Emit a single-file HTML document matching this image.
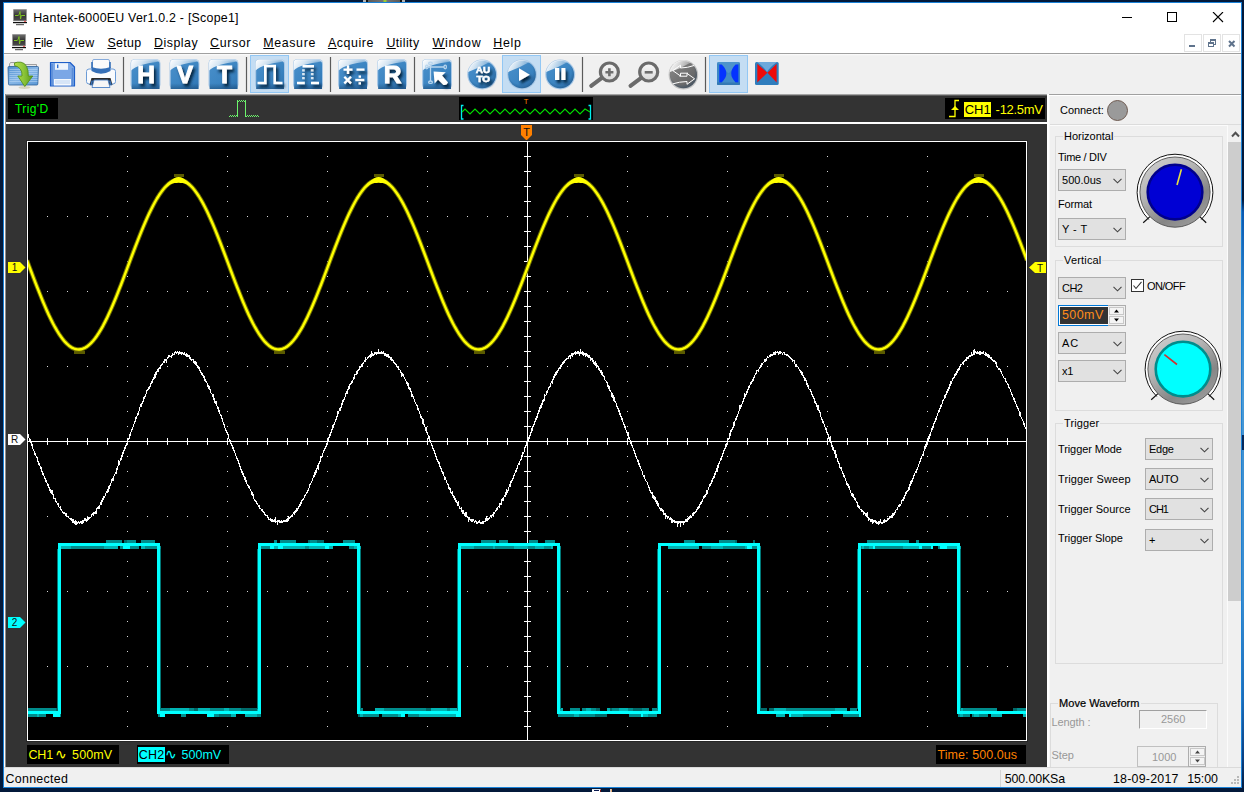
<!DOCTYPE html>
<html><head><meta charset="utf-8"><title>Hantek-6000EU Ver1.0.2 - [Scope1]</title>
<style>

*{box-sizing:border-box;margin:0;padding:0}
html,body{width:1244px;height:792px;overflow:hidden;background:#03193a}
body{font-family:"Liberation Sans",sans-serif;font-size:12px;color:#000;position:relative}
#desk{position:absolute;left:1242px;top:0;width:2px;height:792px;background:linear-gradient(#03193a 0,#03193a 200px,#0a58b0 212px,#2f86cc 300px,#4a9ad6 400px,#4494d2 435px,#06285a 435px,#06285a 450px,#4090d0 450px,#3a8ccf 600px,#1c6cb8 700px,#0a3e80 760px,#03193a 790px)}
#art1{position:absolute;left:592px;top:789px;width:9px;height:3px;background:#fff;border-top:1px solid #dfe8f0;border-right:1px solid #7a1a1a}
#art1 i{position:absolute;left:2px;top:0;width:5px;height:1px;background:#0a1a50}
#art2{position:absolute;left:610px;top:789px;width:2px;height:3px;background:linear-gradient(90deg,#cfd8e8,#f0a050)}
#art3{position:absolute;left:363px;top:0;width:42px;height:2px;background:linear-gradient(90deg,#b4b4b4 0,#b4b4b4 3px,#111 3px,#111 4.500px,#5a5a5a 5px,#747474 20px,#9acd32 21px,#9acd32 23px,#747474 24px,#5a5a5a 36.500px,#111 37px,#111 39px,#b4b4b4 39px)}
#win{position:absolute;left:3px;top:2px;width:1239px;height:786px;background:#1a82d8}
#win>div{position:absolute}
#title{left:1px;top:1px;width:1237px;height:28px;background:#fff}
.tt{position:absolute;top:7px;font-size:12.4px;line-height:16px;white-space:nowrap}
.mon{position:absolute}
#wctl{position:absolute;left:1118px;top:9px}
#menu{left:1px;top:29px;width:1237px;height:23px;background:#fff;border-bottom:1px solid #a0a0a0}
.mi{position:absolute;top:4px;font-size:12.4px;line-height:16px;white-space:nowrap}
.mi u{text-decoration:underline;text-underline-offset:1px}
.mdi{position:absolute;top:3px;width:18px;height:18px;border:1px solid #e3e3e3;background:#fff}
.mdi i{position:absolute;display:block}
#tbar{left:1px;top:52px;width:1237px;height:40px;background:linear-gradient(#fdfdfd 0,#f0f0f0 2px)}
#sstrip{left:1px;top:92px;width:1043px;height:2px;background:linear-gradient(#a4a4a4 0,#a4a4a4 1px,#5c5c5c 1px)}
#pstrip{left:1044px;top:92px;width:194px;height:2px;background:linear-gradient(#a0a0a0 0,#a0a0a0 1px,#fff 1px);border-left:2px solid #fff}
#scope{left:3px;top:94px;width:1041px;height:671px;background:#333}
#lbord{left:1px;top:92px;width:2px;height:673px;background:linear-gradient(90deg,#fff 0,#fff 50%,#8c8c8c 50%)}
.bk{position:absolute;display:block;background:#000}
.t{position:absolute;white-space:nowrap;line-height:15px}
.tl{font-family:"DejaVu Sans",sans-serif;font-weight:200;font-size:13.5px;line-height:15px}
#wl{position:absolute;left:0;top:26px;width:1041px;height:2px;background:#fff}
#panel{left:1044px;top:94px;width:194px;height:671px;background:#f0f0f0;font-size:11px}
#status{left:1px;top:765px;width:1237px;height:20px;background:#f0f0f0;font-size:12.400px;border-top:1px solid #dadada}
#status span{position:absolute;white-space:nowrap}
.sd{position:absolute;top:2px;width:1px;height:17px;background:#d4d4d4}

#panel{overflow:hidden}
#panel>*{position:absolute}
.pl{left:0;top:0;width:3px;height:671px;background:linear-gradient(90deg,#fff 0,#fff 2px,#f7f7f7 2px)}
.lb,.gl{white-space:nowrap;line-height:14px;font-size:11px}
.gl{background:#f0f0f0;padding:0 1px 0 1px;margin-left:-1px}
.dis{color:#989898}
.gb{border:1px solid #dcdcdc}
.hl{height:1px;background:#dcdcdc}
.led{display:block;width:21px;height:21px;border-radius:50%;background:#9a9a9a;border:1px solid #6e5a50}
.cb{background:#e1e1e1;border:1px solid #adadad}
.cb span{position:absolute;left:3px;top:4px;line-height:13px;font-size:11px;white-space:nowrap}
.cb svg{position:absolute;right:3.5px;top:8px}
.ck{width:13px;height:13px;border:1px solid #333;background:#fff}
.ck svg{position:absolute;left:-1px;top:-1px}
.sb{background:#f0f0f0;border-left:1px solid #fbfbfb}
.th{position:absolute;left:0;width:13px;background:#cdcdcd}
.sp{background:#fff;border:1px solid #0078d7}
.sp .sel{position:absolute;left:1px;top:1px;width:48px;height:17px;background:#333;color:#ff8c1a;font-size:12.500px;line-height:17px;padding-left:2px}
.ud{position:absolute;right:-1px;top:-1px;width:18px;height:21px;background:#f0f0f0;border:1px solid #adadad;border-left:0}
.ud b,.ud2 b{display:block;position:absolute;left:1px;width:15px;height:8px;border:1px solid #c8c8c8;background:#f4f4f4}
.ud b:first-child,.ud2 b:first-child{top:1px}
.ud b:last-child,.ud2 b:last-child{top:10px}
.ud svg,.ud2 svg{position:absolute;left:3px;top:1px}
.ed{border:1px solid #a0a0a0;border-right-color:#fff;border-bottom-color:#fff;background:#f0f0f0}
.ed span,.sp2 span{position:absolute;color:#989898;font-size:11px;line-height:13px;top:2px}
.ed span{left:21px}
.sp2{border:1px solid #c0c0c0;background:#f0f0f0}
.sp2 span{left:14px;top:4px}
.ud2{position:absolute;right:-1px;top:-1px;width:18px;height:21px;background:#f0f0f0;border:1px solid #adadad}

</style></head>
<body>
<div id="desk"></div><div id="art1"><i></i></div><div id="art2"></div><div id="art3"></div>
<div id="win">
<div id="title"><svg class="mon" style="left:8px;top:6px" width="16" height="17" viewBox="0 0 16 17">
<defs><linearGradient id="mg1" x1="0" y1="0" x2="0" y2="1"><stop offset="0" stop-color="#6a6a6a"/><stop offset=".5" stop-color="#333"/><stop offset="1" stop-color="#4c4c4c"/></linearGradient></defs>
<rect x="1" y="0" width="14" height="13.500" rx="1" fill="#9a9a9a"/>
<rect x="2" y="1" width="12" height="10.500" fill="url(#mg1)"/>
<path d="M3 6.500H6L7.200 5.500L8 2.500L8.500 10L9.300 6.500H13" stroke="#7ec225" stroke-width="1" fill="none"/>
<rect x="1" y="12" width="14" height="1" fill="#e8e8e8"/>
<rect x="12.300" y="11.800" width="1.400" height="1.200" fill="#e33"/>
<rect x="1" y="13" width="14" height="1.200" fill="#111"/>
<rect x="6" y="14.200" width="4" height="1" fill="#c8c8c8"/>
<rect x="4" y="15.200" width="8" height="1" fill="#444"/>
</svg><span class="tt" style="left:29.2px;letter-spacing:0.238px;">Hantek-6000EU Ver1.0.2 - [Scope1]</span>
<svg id="wctl" width="110" height="12" viewBox="0 0 110 12"><g stroke="#000" stroke-width="1" fill="none" shape-rendering="crispEdges"><path d="M0 5.5H10"/><rect x="45.5" y="0.5" width="9" height="9"/></g><path d="M91 0L101 10M101 0L91 10" stroke="#000" stroke-width="1.1" fill="none"/></svg>
</div>
<div id="menu"><svg class="mon" style="left:7px;top:3px" width="16" height="17" viewBox="0 0 16 17">
<defs><linearGradient id="mg2" x1="0" y1="0" x2="0" y2="1"><stop offset="0" stop-color="#6a6a6a"/><stop offset=".5" stop-color="#333"/><stop offset="1" stop-color="#4c4c4c"/></linearGradient></defs>
<rect x="1" y="0" width="14" height="13.500" rx="1" fill="#9a9a9a"/>
<rect x="2" y="1" width="12" height="10.500" fill="url(#mg2)"/>
<path d="M3 6.500H6L7.200 5.500L8 2.500L8.500 10L9.300 6.500H13" stroke="#7ec225" stroke-width="1" fill="none"/>
<rect x="1" y="12" width="14" height="1" fill="#e8e8e8"/>
<rect x="12.300" y="11.800" width="1.400" height="1.200" fill="#e33"/>
<rect x="1" y="13" width="14" height="1.200" fill="#111"/>
<rect x="6" y="14.200" width="4" height="1" fill="#c8c8c8"/>
<rect x="4" y="15.200" width="8" height="1" fill="#444"/>
</svg><span class="mi" style="left:29.6px;letter-spacing:-0.223px;"><u>F</u>ile</span><span class="mi" style="left:62.4px;letter-spacing:0.42px;"><u>V</u>iew</span><span class="mi" style="left:103.4px;letter-spacing:0.327px;"><u>S</u>etup</span><span class="mi" style="left:150.1px;letter-spacing:0.477px;"><u>D</u>isplay</span><span class="mi" style="left:206.1px;letter-spacing:0.622px;"><u>C</u>ursor</span><span class="mi" style="left:259.3px;letter-spacing:0.63px;"><u>M</u>easure</span><span class="mi" style="left:323.9px;letter-spacing:0.581px;"><u>A</u>cquire</span><span class="mi" style="left:382.4px;letter-spacing:0.401px;"><u>U</u>tility</span><span class="mi" style="left:428.5px;letter-spacing:0.824px;"><u>W</u>indow</span><span class="mi" style="left:489.3px;letter-spacing:0.672px;"><u>H</u>elp</span>
<div class="mdi" style="left:1180px"><i style="left:4px;top:10px;width:6px;height:2px;background:#5f738c"></i></div>
<div class="mdi" style="left:1199px"><svg width="17" height="17" viewBox="0 0 17 17" style="position:absolute;left:-1px;top:0px"><g fill="none" stroke="#5f738c" stroke-width="1" shape-rendering="crispEdges"><path d="M7.5 6.5V4.5H12.5V9.5H10.5"/><path d="M7.5 5.5H12.5" /><rect x="5.5" y="7.5" width="5" height="4"/><path d="M5.5 8.5H10.5"/></g></svg></div>
<div class="mdi" style="left:1218px"><svg width="17" height="17" viewBox="0 0 17 17" style="position:absolute;left:0px;top:-0.500px"><path d="M6 6L11.5 11.5M11.5 6L6 11.5" stroke="#5f738c" stroke-width="2" fill="none"/></svg></div>
</div>
<div id="tbar"><svg id="tbs" width="1237" height="40" viewBox="4 54 1237 40" style="position:absolute;left:0;top:0">
<defs>
<linearGradient id="bsq" x1="0" y1="0" x2="1" y2="1"><stop offset="0" stop-color="#4a90cb"/><stop offset=".6" stop-color="#3b84c1"/><stop offset="1" stop-color="#2f74b2"/></linearGradient>
<linearGradient id="gsq" x1="0" y1="0" x2="1" y2="1"><stop offset="0" stop-color="#8a8a8a"/><stop offset=".6" stop-color="#6e6e6e"/><stop offset="1" stop-color="#5c5c5c"/></linearGradient>
<linearGradient id="bsh" x1="0" y1="0" x2="0" y2="1"><stop offset="0.800" stop-color="#123b63" stop-opacity="0"/><stop offset="1" stop-color="#123b63" stop-opacity=".45"/></linearGradient>
<radialGradient id="csh" cx=".45" cy=".4" r=".6"><stop offset="0.750" stop-color="#123b63" stop-opacity="0"/><stop offset="1" stop-color="#123b63" stop-opacity=".35"/></radialGradient>
<linearGradient id="gls" x1="0" y1="0" x2="1" y2="0.300"><stop offset="0" stop-color="#fff" stop-opacity="1"/><stop offset=".4" stop-color="#fff" stop-opacity=".78"/><stop offset="1" stop-color="#fff" stop-opacity=".28"/></linearGradient>
<filter id="ds" x="-30%" y="-30%" width="170%" height="170%"><feGaussianBlur in="SourceAlpha" stdDeviation="1.600"/><feOffset dx="2.400" dy="2.600" result="b"/><feFlood flood-color="#06203a" flood-opacity="1"/><feComposite in2="b" operator="in"/><feMerge><feMergeNode/><feMergeNode in="SourceGraphic"/></feMerge></filter>
<linearGradient id="fold" x1="0" y1="0" x2="1" y2="1"><stop offset="0" stop-color="#4f8fd0"/><stop offset=".5" stop-color="#86b6e6"/><stop offset="1" stop-color="#5b98d6"/></linearGradient>
<linearGradient id="grn" x1="0" y1="0" x2="1" y2="0"><stop offset="0" stop-color="#b5e04a"/><stop offset=".5" stop-color="#8cc63a"/><stop offset="1" stop-color="#5c9a1c"/></linearGradient>
<linearGradient id="lens" x1="0" y1="0" x2="0" y2="1"><stop offset="0" stop-color="#fafafa"/><stop offset="1" stop-color="#d9d9d9"/></linearGradient>
</defs>
<g><path d="M10.500 62.500H19.500L21 64.500H36.500V70H9.500V64Z" fill="#e8e8e8" stroke="#8c8c8c" stroke-width="0.800"/><path d="M8 67.500Q8 66.500 9 66.500H37.500Q38.500 66.500 38.500 67.500L37.800 84Q37.800 85 36.800 85H9.500Q8.500 85 8.500 84Z" fill="url(#fold)" stroke="#2c5f98" stroke-width="0.800"/><path d="M9.500 69.500H37.500M9.500 71.500H37.500M9.500 73.500H37.500M9.500 75.500H37.500M9.500 77.500H37.500M9.500 79.500H37.500M9.500 81.500H37.500" stroke="#c4def6" stroke-width="0.700" opacity=".7"/><ellipse cx="24.500" cy="87.500" rx="6" ry="1.500" fill="#c9c7a8" opacity=".7"/><path d="M14.500 63Q17 61.800 21 62.200Q28.500 63.500 28.300 76H32.800L24.800 86.500L17.800 76H22Q22.500 67.500 14.500 65.500Z" fill="url(#grn)" stroke="#4e8a14" stroke-width="0.800" stroke-linejoin="round"/></g>
<g><path d="M50.500 62.500H70L74.500 67V86H50.500Z" fill="#7ba7e6" stroke="#1f5fc8" stroke-width="1.200" stroke-linejoin="round"/><path d="M52 64V85M72.500 68V85" stroke="#5a8cd8" stroke-width="1.500"/><rect x="55" y="63.200" width="13" height="6.600" fill="#eef4fc"/><rect x="57" y="64.500" width="1.400" height="3.600" fill="#2f6fd0"/><rect x="54" y="79" width="17" height="6.500" fill="#f4f8fd"/><path d="M55 81H70M55 83H70" stroke="#a9c6ee" stroke-width="0.800"/></g>
<g><rect x="86.500" y="69" width="29" height="15" rx="2.500" fill="#fafbfd" stroke="#6b9bd6" stroke-width="1"/><path d="M92.500 70V61Q92.500 59.500 94 59.500H108Q109.500 59.500 109.500 61V70Z" fill="#fbfbfb" stroke="#7aa3d8" stroke-width="0.900"/><path d="M91.500 67V71Q101 76.500 110.500 71V67Q101 70.500 91.500 67Z" fill="#3670b8"/><path d="M92 62V68M110 62V68" stroke="#3670b8" stroke-width="1.600"/><path d="M91.500 78H110.500L112.500 85H89.500Z" fill="#2b2b2b"/><path d="M94 80H108L110 87.500H92Z" fill="#f6f6f6" stroke="#4b80c4" stroke-width="0.900"/><path d="M92.300 80.500L90.800 85.500M109.700 80.500L111.200 85.500" stroke="#3670b8" stroke-width="1.500"/></g>
<path d="M123.500 57V92" stroke="#5a5a5a" stroke-width="1.200"/>
<g transform="translate(130.5 59)"><rect x="0" y="0" width="30" height="30" rx="4.500" fill="#a9c8e6"/><path d="M1.200 30V5Q1.200 1.200 5 1.200H25Q29 1.200 29 5V30Z" fill="url(#bsq)"/><path d="M1.200 30V5Q1.200 1.200 5 1.200H25Q29 1.200 29 5V30Z" fill="url(#bsh)"/><path d="M0.600 11.500Q7 5 29.4 2.500V4.500Q29.4 0.600 25.5 0.600H4.500Q0.600 0.600 0.600 4.500Z" fill="url(#gls)"/></g>
<text x="146" y="83" font-size="24.5" font-weight="bold" text-anchor="middle" fill="#fff" stroke="#fff" stroke-width="0.900" filter="url(#ds)" font-family="Liberation Sans, sans-serif">H</text>
<g transform="translate(169.5 59)"><rect x="0" y="0" width="30" height="30" rx="4.500" fill="#a9c8e6"/><path d="M1.200 30V5Q1.200 1.200 5 1.200H25Q29 1.200 29 5V30Z" fill="url(#bsq)"/><path d="M1.200 30V5Q1.200 1.200 5 1.200H25Q29 1.200 29 5V30Z" fill="url(#bsh)"/><path d="M0.600 11.500Q7 5 29.4 2.500V4.500Q29.4 0.600 25.5 0.600H4.500Q0.600 0.600 0.600 4.500Z" fill="url(#gls)"/></g>
<text x="185" y="83" font-size="24.5" font-weight="bold" text-anchor="middle" fill="#fff" stroke="#fff" stroke-width="0.900" filter="url(#ds)" font-family="Liberation Sans, sans-serif">V</text>
<g transform="translate(208.5 59)"><rect x="0" y="0" width="30" height="30" rx="4.500" fill="#a9c8e6"/><path d="M1.200 30V5Q1.200 1.200 5 1.200H25Q29 1.200 29 5V30Z" fill="url(#bsq)"/><path d="M1.200 30V5Q1.200 1.200 5 1.200H25Q29 1.200 29 5V30Z" fill="url(#bsh)"/><path d="M0.600 11.500Q7 5 29.4 2.500V4.500Q29.4 0.600 25.5 0.600H4.500Q0.600 0.600 0.600 4.500Z" fill="url(#gls)"/></g>
<text x="224.5" y="83" font-size="24.5" font-weight="bold" text-anchor="middle" fill="#fff" stroke="#fff" stroke-width="0.900" filter="url(#ds)" font-family="Liberation Sans, sans-serif">T</text>
<path d="M246.500 57V92" stroke="#5a5a5a" stroke-width="1.200"/>
<rect x="250.500" y="55.500" width="38" height="37" fill="#c4ddf3" stroke="#92c7f4" stroke-width="1"/>
<g transform="translate(255 59)"><rect x="0" y="0" width="30" height="30" rx="4.500" fill="#a9c8e6"/><path d="M1.200 30V5Q1.200 1.200 5 1.200H25Q29 1.200 29 5V30Z" fill="url(#bsq)"/><path d="M1.200 30V5Q1.200 1.200 5 1.200H25Q29 1.200 29 5V30Z" fill="url(#bsh)"/><path d="M0.600 11.500Q7 5 29.4 2.500V4.500Q29.4 0.600 25.5 0.600H4.500Q0.600 0.600 0.600 4.500Z" fill="url(#gls)"/></g>
<path d="M257.500 83H265.300V66H274.700V83H282.500" fill="none" stroke="#fff" stroke-width="2.600" filter="url(#ds)"/>
<g transform="translate(293 59)"><rect x="0" y="0" width="30" height="30" rx="4.500" fill="#a9c8e6"/><path d="M1.200 30V5Q1.200 1.200 5 1.200H25Q29 1.200 29 5V30Z" fill="url(#bsq)"/><path d="M1.200 30V5Q1.200 1.200 5 1.200H25Q29 1.200 29 5V30Z" fill="url(#bsh)"/><path d="M0.600 11.500Q7 5 29.4 2.500V4.500Q29.4 0.600 25.5 0.600H4.500Q0.600 0.600 0.600 4.500Z" fill="url(#gls)"/></g>
<g filter="url(#ds)" stroke="#fff" fill="none"><path d="M302.500 66.300H314M297 83H304.800M311 83H319" stroke-width="2.400"/><path d="M303.400 69.200V80.500M312.200 69.200V80.500" stroke-width="2.600" stroke-dasharray="2.200 1.700" opacity=".8"/></g>
<path d="M330.500 57V92" stroke="#5a5a5a" stroke-width="1.200"/>
<g transform="translate(338 59)"><rect x="0" y="0" width="30" height="30" rx="4.500" fill="#a9c8e6"/><path d="M1.200 30V5Q1.200 1.200 5 1.200H25Q29 1.200 29 5V30Z" fill="url(#bsq)"/><path d="M1.200 30V5Q1.200 1.200 5 1.200H25Q29 1.200 29 5V30Z" fill="url(#bsh)"/><path d="M0.600 11.500Q7 5 29.4 2.500V4.500Q29.4 0.600 25.5 0.600H4.500Q0.600 0.600 0.600 4.500Z" fill="url(#gls)"/></g>
<g filter="url(#ds)" stroke="#fff" fill="none" stroke-width="2.300"><path d="M343.500 69.600H352.500M348 65.200V74"/><path d="M356.500 69.600H364.500"/><path d="M344.300 76.800L351 83.400M351 76.800L344.300 83.400"/><path d="M355.300 80H364.300"/><path d="M359.800 75.500V77.700M359.800 82.300V84.500" stroke-width="2.400"/></g>
<g transform="translate(377 59)"><rect x="0" y="0" width="30" height="30" rx="4.500" fill="#a9c8e6"/><path d="M1.200 30V5Q1.200 1.200 5 1.200H25Q29 1.200 29 5V30Z" fill="url(#bsq)"/><path d="M1.200 30V5Q1.200 1.200 5 1.200H25Q29 1.200 29 5V30Z" fill="url(#bsh)"/><path d="M0.600 11.500Q7 5 29.4 2.500V4.500Q29.4 0.600 25.5 0.600H4.500Q0.600 0.600 0.600 4.500Z" fill="url(#gls)"/></g>
<text x="392.5" y="83" font-size="24.5" font-weight="bold" text-anchor="middle" fill="#fff" stroke="#fff" stroke-width="0.900" filter="url(#ds)" font-family="Liberation Sans, sans-serif">R</text>
<path d="M414.500 57V92" stroke="#5a5a5a" stroke-width="1.200"/>
<g transform="translate(422 59)"><rect x="0" y="0" width="30" height="30" rx="4.500" fill="#a9c8e6"/><path d="M1.200 30V5Q1.200 1.200 5 1.200H25Q29 1.200 29 5V30Z" fill="url(#bsq)"/><path d="M1.200 30V5Q1.200 1.200 5 1.200H25Q29 1.200 29 5V30Z" fill="url(#bsh)"/><path d="M0.600 11.500Q7 5 29.4 2.500V4.500Q29.4 0.600 25.5 0.600H4.500Q0.600 0.600 0.600 4.500Z" fill="url(#gls)"/></g>
<g fill="none" stroke="#b9d6ee" stroke-width="1.300"><path d="M430.500 64.500V81M428 67H444"/><ellipse cx="430.500" cy="63.300" rx="1.900" ry="1.200"/><ellipse cx="430.500" cy="82.200" rx="1.900" ry="1.200"/><ellipse cx="426.800" cy="67" rx="1.200" ry="1.800"/><ellipse cx="445.200" cy="67" rx="1.200" ry="1.800"/></g>
<path d="M433.600 71.600L445.800 72.200L442 75.600L448 82.500Q446.500 85.500 443.500 85L438 79.600L434.600 83.500Z" fill="#fff" filter="url(#ds)"/>
<path d="M459.500 57V92" stroke="#5a5a5a" stroke-width="1.200"/>
<g transform="translate(482.2 74.5)"><circle r="15" fill="#a9c8e6"/><circle r="13.8" fill="url(#bsq)"/><circle r="13.8" fill="url(#csh)"/><path d="M-14.1 -2.400A14.2 14.2 0 0 1 7.5 -12.4Q-2.0 -6.8 -14.1 -2.400Z" fill="url(#gls)"/></g>
<g filter="url(#ds)" font-size="8.800" font-weight="bold" fill="#fff" stroke="#fff" stroke-width="0.500" font-family="Liberation Sans, sans-serif"><text x="475.800" y="72.500" textLength="14.300" lengthAdjust="spacingAndGlyphs">AU</text><text x="476.400" y="81.800" textLength="13.600" lengthAdjust="spacingAndGlyphs">TO</text></g>
<rect x="502.500" y="55.500" width="38" height="37" fill="#c4ddf3" stroke="#92c7f4" stroke-width="1"/>
<g transform="translate(522 74.5)"><circle r="15" fill="#a9c8e6"/><circle r="13.8" fill="url(#bsq)"/><circle r="13.8" fill="url(#csh)"/><path d="M-14.1 -2.400A14.2 14.2 0 0 1 7.5 -12.4Q-2.0 -6.8 -14.1 -2.400Z" fill="url(#gls)"/></g>
<path d="M519 68.300L529.800 74.700L519 81Z" fill="#fff" filter="url(#ds)"/>
<g transform="translate(560.2 74.5)"><circle r="15" fill="#a9c8e6"/><circle r="13.8" fill="url(#bsq)"/><circle r="13.8" fill="url(#csh)"/><path d="M-14.1 -2.400A14.2 14.2 0 0 1 7.5 -12.4Q-2.0 -6.8 -14.1 -2.400Z" fill="url(#gls)"/></g>
<path d="M555 68H559.200V80H555ZM561.400 68H565.400V80H561.400Z" fill="#fff" filter="url(#ds)"/>
<path d="M582.500 57V92" stroke="#5a5a5a" stroke-width="1.200"/>
<g stroke="#6b6b6b" fill="none" stroke-linecap="round"><path d="M601.9 77.8L591.1999999999999 85.8" stroke-width="4"/><circle cx="609.4" cy="72" r="9" stroke-width="3.200" fill="url(#lens)"/><path d="M605.4 72.300H613.4M609.4 68.300V76.300" stroke-width="2.600" stroke-linecap="butt" stroke="#6e6e6e"/></g>
<g stroke="#6b6b6b" fill="none" stroke-linecap="round"><path d="M641.2 77.8L630.5 85.8" stroke-width="4"/><circle cx="648.7" cy="72" r="9" stroke-width="3.200" fill="url(#lens)"/><path d="M644.7 72.300H652.7" stroke-width="2.600" stroke-linecap="butt" stroke="#6e6e6e"/></g>
<g transform="translate(683.4 74.7)"><circle r="14.8" fill="#c4c4c4"/><circle r="13.600000000000001" fill="url(#gsq)"/><circle r="13.600000000000001" fill="url(#csh)"/><path d="M-13.9 -2.400A14.0 14.0 0 0 1 7.4 -12.3Q-1.9 -6.7 -13.9 -2.400Z" fill="url(#gls)"/></g>
<g fill="none" stroke="#fff" stroke-width="1" stroke-linejoin="miter"><path d="M694 65.500Q688 67.800 680.500 68V65.200L672.800 70.600L680.500 76V73.200H688"/><path d="M673 83.800Q679 81.800 687 81.500V84.300L694.600 78.800L687 73.400V76.200H679.500"/></g>
<path d="M705.500 57V92" stroke="#5a5a5a" stroke-width="1.200"/>
<rect x="709.500" y="55.500" width="38" height="37" fill="#c4ddf3" stroke="#92c7f4" stroke-width="1"/>
<g><rect x="717" y="62" width="23" height="23" rx="1.500" fill="#3b87c4"/><path d="M717 62H740L728.500 73.500Z" fill="#5a9bd0" opacity=".6"/><path d="M717 85H740L728.500 73.500Z" fill="#4a8fc8" opacity=".5"/><path d="M719.300 64.600H721.700Q731 73.500 721.700 82.400H719.300Z" fill="#0433ff"/><path d="M738.400 64.600H735.600Q726.800 73.500 735.600 82.400H738.400Z" fill="#0433ff"/><path d="M717 82.500H740V85H717Z" fill="#2c6ea8" opacity=".6"/></g>
<g><rect x="755" y="62" width="23.700" height="23" rx="1.500" fill="#2f7dbd"/><path d="M757 62H777Q770 67 767 72Q764 67 757 62Z" fill="#7db4e2" opacity=".8"/><path d="M757.300 63.800Q763.500 69.500 767.400 72.800Q763.500 76.500 757.300 82.400Z" fill="#ee0a0a"/><path d="M776.600 63.800Q771 69.500 767.400 72.800Q771 76.500 776.600 82.400Z" fill="#ee0a0a"/></g>
</svg></div>
<div id="sstrip"></div><div id="pstrip"></div>
<div id="lbord"></div>
<div id="scope">
<i class="bk" style="left:2px;top:2px;width:50px;height:21px;background:#000"></i><span class="t" style="left:9.1px;top:6.5px;font-size:12px;line-height:12px;letter-spacing:0.383px;color:#00ff00;">Trig'D</span><svg style="position:absolute;left:214px;top:2px" width="45" height="22" viewBox="220 98 45 22"><g stroke="#6cf36c" stroke-width="1" fill="none" shape-rendering="crispEdges"><path d="M229 116.500H238M246 116.500H259M239 100.500H245" stroke-dasharray="1 1"/><path d="M230 115.500H237M247 115.500H258M238 101.500H246" stroke-dasharray="1 1"/><path d="M237.500 100V117M245.500 100V117"/></g></svg><i class="bk" style="left:453px;top:1px;width:134px;height:23px;background:#000"></i><span class="t" style="left:517.7px;top:2.2px;font-size:7.5px;line-height:7.5px;letter-spacing:0.506px;color:#ff8000;">T</span><svg style="position:absolute;left:453px;top:1px" width="134" height="23" viewBox="459 97 134 23"><path d="M463.500 105.500H461.500V119H463.500M588.500 105.500H590.500V119H588.500" stroke="#0ee" stroke-width="1.300" fill="none"/><path d="M462 112 L465.0 109 L470.0 114 L475.0 109 L480.0 114 L485.0 109 L490.0 114 L495.0 109 L500.0 114 L505.0 109 L510.0 114 L515.0 109 L520.0 114 L525.0 109 L530.0 114 L535.0 109 L540.0 114 L545.0 109 L550.0 114 L555.0 109 L560.0 114 L565.0 109 L570.0 114 L575.0 109 L580.0 114 L585.0 109 L590 112" fill="none" stroke="#0d0" stroke-width="1.100"/></svg><i class="bk" style="left:939px;top:2px;width:100px;height:21px;background:#000"></i><svg style="position:absolute;left:942px;top:3px" width="12" height="19" viewBox="948 99 12 19"><path d="M949 116.500H955V100.500H959" fill="none" stroke="#ff0" stroke-width="1.300"/><path d="M955 106L951 110H959Z" fill="#ff0"/></svg><i class="bk" style="left:958px;top:6px;width:27px;height:15px;background:#ffff00"></i><span class="t" style="left:958.7px;top:7.0px;font-size:13px;line-height:13px;letter-spacing:0.042px;color:#000;">CH1</span><span class="t" style="left:989.6px;top:7.0px;font-size:13px;line-height:13px;letter-spacing:-0.29px;color:#ffff00;">-12.5mV</span>
<div id="wl"></div>
<svg id="plot" style="position:absolute;left:0;top:28px" width="1041" height="621" viewBox="6 124 1041 621">
<path d="M521 125H532V135L526.500 140.500L521 135Z" fill="#ff8000"/>
<text x="526.500" y="135.500" font-size="11" text-anchor="middle" fill="#111" font-family="Liberation Sans, sans-serif">T</text>
<rect x="26" y="140" width="1002" height="602" fill="#262626"/>
<rect x="27.500" y="141.500" width="999" height="599" fill="#000" stroke="#fff" stroke-width="1" shape-rendering="crispEdges"/>
<g stroke="#d8d8d8" stroke-width="1" shape-rendering="crispEdges" fill="none"><path d="M47 216.5H1027" stroke-dasharray="1 19"/><path d="M47 291.5H1027" stroke-dasharray="1 19"/><path d="M47 366.5H1027" stroke-dasharray="1 19"/><path d="M47 516.5H1027" stroke-dasharray="1 19"/><path d="M47 591.5H1027" stroke-dasharray="1 19"/><path d="M47 666.5H1027" stroke-dasharray="1 19"/><path d="M127.5 156V740" stroke-dasharray="1 14"/><path d="M227.5 156V740" stroke-dasharray="1 14"/><path d="M327.5 156V740" stroke-dasharray="1 14"/><path d="M427.5 156V740" stroke-dasharray="1 14"/><path d="M627.5 156V740" stroke-dasharray="1 14"/><path d="M727.5 156V740" stroke-dasharray="1 14"/><path d="M827.5 156V740" stroke-dasharray="1 14"/><path d="M927.5 156V740" stroke-dasharray="1 14"/></g>
<g stroke="#fff" shape-rendering="crispEdges" fill="none"><path d="M28 441.500H1026M527.500 142V740" stroke-width="1"/><path d="M47 441.500H1026" stroke-width="7" stroke-dasharray="1 19"/><path d="M527.500 156V740" stroke-width="7" stroke-dasharray="1 14"/></g>
<clipPath id="pc"><rect x="28" y="142" width="998" height="598"/></clipPath>
<g clip-path="url(#pc)" fill="none">
<path d="M174 175.500H184M74 352.500H85M374 175.500H384M274 352.500H285M574 175.500H584M474 352.500H485M774 175.500H784M674 352.500H685M974 175.500H984M874 352.500H885" stroke="#5a5a00" stroke-width="3" shape-rendering="crispEdges"/>
<path d="M27 260.3L29 265.7L31 271.0L33 276.3L35 281.6L37 286.7L39 291.8L41 296.8L43 301.7L45 306.4L47 311.0L49 315.4L51 319.5L53 323.5L55 327.2L57 330.7L59 333.9L61 336.8L63 339.5L65 341.9L67 343.9L69 345.7L71 347.1L73 348.2L75 349.0L77 349.4L79 349.5L81 349.3L83 348.7L85 347.8L87 346.6L89 345.0L91 343.1L93 341.0L95 338.5L97 335.7L99 332.7L101 329.3L103 325.8L105 321.9L107 317.9L109 313.6L111 309.2L113 304.6L115 299.8L117 294.9L119 289.8L121 284.7L123 279.5L125 274.2L127 268.9L129 263.5L131 258.2L133 252.9L135 247.6L137 242.5L139 237.4L141 232.4L143 227.5L145 222.8L147 218.2L149 213.8L151 209.7L153 205.7L155 202.0L157 198.5L159 195.3L161 192.4L163 189.7L165 187.3L167 185.3L169 183.5L171 182.1L173 181.0L175 180.2L177 179.8L179 179.7L181 179.9L183 180.5L185 181.4L187 182.6L189 184.2L191 186.1L193 188.2L195 190.7L197 193.5L199 196.5L201 199.9L203 203.4L205 207.3L207 211.3L209 215.6L211 220.0L213 224.6L215 229.4L217 234.3L219 239.4L221 244.5L223 249.7L225 255.0L227 260.3L229 265.7L231 271.0L233 276.3L235 281.6L237 286.7L239 291.8L241 296.8L243 301.7L245 306.4L247 311.0L249 315.4L251 319.5L253 323.5L255 327.2L257 330.7L259 333.9L261 336.8L263 339.5L265 341.9L267 343.9L269 345.7L271 347.1L273 348.2L275 349.0L277 349.4L279 349.5L281 349.3L283 348.7L285 347.8L287 346.6L289 345.0L291 343.1L293 341.0L295 338.5L297 335.7L299 332.7L301 329.3L303 325.8L305 321.9L307 317.9L309 313.6L311 309.2L313 304.6L315 299.8L317 294.9L319 289.8L321 284.7L323 279.5L325 274.2L327 268.9L329 263.5L331 258.2L333 252.9L335 247.6L337 242.5L339 237.4L341 232.4L343 227.5L345 222.8L347 218.2L349 213.8L351 209.7L353 205.7L355 202.0L357 198.5L359 195.3L361 192.4L363 189.7L365 187.3L367 185.3L369 183.5L371 182.1L373 181.0L375 180.2L377 179.8L379 179.7L381 179.9L383 180.5L385 181.4L387 182.6L389 184.2L391 186.1L393 188.2L395 190.7L397 193.5L399 196.5L401 199.9L403 203.4L405 207.3L407 211.3L409 215.6L411 220.0L413 224.6L415 229.4L417 234.3L419 239.4L421 244.5L423 249.7L425 255.0L427 260.3L429 265.7L431 271.0L433 276.3L435 281.6L437 286.7L439 291.8L441 296.8L443 301.7L445 306.4L447 311.0L449 315.4L451 319.5L453 323.5L455 327.2L457 330.7L459 333.9L461 336.8L463 339.5L465 341.9L467 343.9L469 345.7L471 347.1L473 348.2L475 349.0L477 349.4L479 349.5L481 349.3L483 348.7L485 347.8L487 346.6L489 345.0L491 343.1L493 341.0L495 338.5L497 335.7L499 332.7L501 329.3L503 325.8L505 321.9L507 317.9L509 313.6L511 309.2L513 304.6L515 299.8L517 294.9L519 289.8L521 284.7L523 279.5L525 274.2L527 268.9L529 263.5L531 258.2L533 252.9L535 247.6L537 242.5L539 237.4L541 232.4L543 227.5L545 222.8L547 218.2L549 213.8L551 209.7L553 205.7L555 202.0L557 198.5L559 195.3L561 192.4L563 189.7L565 187.3L567 185.3L569 183.5L571 182.1L573 181.0L575 180.2L577 179.8L579 179.7L581 179.9L583 180.5L585 181.4L587 182.6L589 184.2L591 186.1L593 188.2L595 190.7L597 193.5L599 196.5L601 199.9L603 203.4L605 207.3L607 211.3L609 215.6L611 220.0L613 224.6L615 229.4L617 234.3L619 239.4L621 244.5L623 249.7L625 255.0L627 260.3L629 265.7L631 271.0L633 276.3L635 281.6L637 286.7L639 291.8L641 296.8L643 301.7L645 306.4L647 311.0L649 315.4L651 319.5L653 323.5L655 327.2L657 330.7L659 333.9L661 336.8L663 339.5L665 341.9L667 343.9L669 345.7L671 347.1L673 348.2L675 349.0L677 349.4L679 349.5L681 349.3L683 348.7L685 347.8L687 346.6L689 345.0L691 343.1L693 341.0L695 338.5L697 335.7L699 332.7L701 329.3L703 325.8L705 321.9L707 317.9L709 313.6L711 309.2L713 304.6L715 299.8L717 294.9L719 289.8L721 284.7L723 279.5L725 274.2L727 268.9L729 263.5L731 258.2L733 252.9L735 247.6L737 242.5L739 237.4L741 232.4L743 227.5L745 222.8L747 218.2L749 213.8L751 209.7L753 205.7L755 202.0L757 198.5L759 195.3L761 192.4L763 189.7L765 187.3L767 185.3L769 183.5L771 182.1L773 181.0L775 180.2L777 179.8L779 179.7L781 179.9L783 180.5L785 181.4L787 182.6L789 184.2L791 186.1L793 188.2L795 190.7L797 193.5L799 196.5L801 199.9L803 203.4L805 207.3L807 211.3L809 215.6L811 220.0L813 224.6L815 229.4L817 234.3L819 239.4L821 244.5L823 249.7L825 255.0L827 260.3L829 265.7L831 271.0L833 276.3L835 281.6L837 286.7L839 291.8L841 296.8L843 301.7L845 306.4L847 311.0L849 315.4L851 319.5L853 323.5L855 327.2L857 330.7L859 333.9L861 336.8L863 339.5L865 341.9L867 343.9L869 345.7L871 347.1L873 348.2L875 349.0L877 349.4L879 349.5L881 349.3L883 348.7L885 347.8L887 346.6L889 345.0L891 343.1L893 341.0L895 338.5L897 335.7L899 332.7L901 329.3L903 325.8L905 321.9L907 317.9L909 313.6L911 309.2L913 304.6L915 299.8L917 294.9L919 289.8L921 284.7L923 279.5L925 274.2L927 268.9L929 263.5L931 258.2L933 252.9L935 247.6L937 242.5L939 237.4L941 232.4L943 227.5L945 222.8L947 218.2L949 213.8L951 209.7L953 205.7L955 202.0L957 198.5L959 195.3L961 192.4L963 189.7L965 187.3L967 185.3L969 183.5L971 182.1L973 181.0L975 180.2L977 179.8L979 179.7L981 179.9L983 180.5L985 181.4L987 182.6L989 184.2L991 186.1L993 188.2L995 190.7L997 193.5L999 196.5L1001 199.9L1003 203.4L1005 207.3L1007 211.3L1009 215.6L1011 220.0L1013 224.6L1015 229.4L1017 234.3L1019 239.4L1021 244.5L1023 249.7L1025 255.0L1027 260.3" stroke="#6e6e00" stroke-width="4.400" stroke-linejoin="round"/>
<path d="M27 260.3L29 265.7L31 271.0L33 276.3L35 281.6L37 286.7L39 291.8L41 296.8L43 301.7L45 306.4L47 311.0L49 315.4L51 319.5L53 323.5L55 327.2L57 330.7L59 333.9L61 336.8L63 339.5L65 341.9L67 343.9L69 345.7L71 347.1L73 348.2L75 349.0L77 349.4L79 349.5L81 349.3L83 348.7L85 347.8L87 346.6L89 345.0L91 343.1L93 341.0L95 338.5L97 335.7L99 332.7L101 329.3L103 325.8L105 321.9L107 317.9L109 313.6L111 309.2L113 304.6L115 299.8L117 294.9L119 289.8L121 284.7L123 279.5L125 274.2L127 268.9L129 263.5L131 258.2L133 252.9L135 247.6L137 242.5L139 237.4L141 232.4L143 227.5L145 222.8L147 218.2L149 213.8L151 209.7L153 205.7L155 202.0L157 198.5L159 195.3L161 192.4L163 189.7L165 187.3L167 185.3L169 183.5L171 182.1L173 181.0L175 180.2L177 179.8L179 179.7L181 179.9L183 180.5L185 181.4L187 182.6L189 184.2L191 186.1L193 188.2L195 190.7L197 193.5L199 196.5L201 199.9L203 203.4L205 207.3L207 211.3L209 215.6L211 220.0L213 224.6L215 229.4L217 234.3L219 239.4L221 244.5L223 249.7L225 255.0L227 260.3L229 265.7L231 271.0L233 276.3L235 281.6L237 286.7L239 291.8L241 296.8L243 301.7L245 306.4L247 311.0L249 315.4L251 319.5L253 323.5L255 327.2L257 330.7L259 333.9L261 336.8L263 339.5L265 341.9L267 343.9L269 345.7L271 347.1L273 348.2L275 349.0L277 349.4L279 349.5L281 349.3L283 348.7L285 347.8L287 346.6L289 345.0L291 343.1L293 341.0L295 338.5L297 335.7L299 332.7L301 329.3L303 325.8L305 321.9L307 317.9L309 313.6L311 309.2L313 304.6L315 299.8L317 294.9L319 289.8L321 284.7L323 279.5L325 274.2L327 268.9L329 263.5L331 258.2L333 252.9L335 247.6L337 242.5L339 237.4L341 232.4L343 227.5L345 222.8L347 218.2L349 213.8L351 209.7L353 205.7L355 202.0L357 198.5L359 195.3L361 192.4L363 189.7L365 187.3L367 185.3L369 183.5L371 182.1L373 181.0L375 180.2L377 179.8L379 179.7L381 179.9L383 180.5L385 181.4L387 182.6L389 184.2L391 186.1L393 188.2L395 190.7L397 193.5L399 196.5L401 199.9L403 203.4L405 207.3L407 211.3L409 215.6L411 220.0L413 224.6L415 229.4L417 234.3L419 239.4L421 244.5L423 249.7L425 255.0L427 260.3L429 265.7L431 271.0L433 276.3L435 281.6L437 286.7L439 291.8L441 296.8L443 301.7L445 306.4L447 311.0L449 315.4L451 319.5L453 323.5L455 327.2L457 330.7L459 333.9L461 336.8L463 339.5L465 341.9L467 343.9L469 345.7L471 347.1L473 348.2L475 349.0L477 349.4L479 349.5L481 349.3L483 348.7L485 347.8L487 346.6L489 345.0L491 343.1L493 341.0L495 338.5L497 335.7L499 332.7L501 329.3L503 325.8L505 321.9L507 317.9L509 313.6L511 309.2L513 304.6L515 299.8L517 294.9L519 289.8L521 284.7L523 279.5L525 274.2L527 268.9L529 263.5L531 258.2L533 252.9L535 247.6L537 242.5L539 237.4L541 232.4L543 227.5L545 222.8L547 218.2L549 213.8L551 209.7L553 205.7L555 202.0L557 198.5L559 195.3L561 192.4L563 189.7L565 187.3L567 185.3L569 183.5L571 182.1L573 181.0L575 180.2L577 179.8L579 179.7L581 179.9L583 180.5L585 181.4L587 182.6L589 184.2L591 186.1L593 188.2L595 190.7L597 193.5L599 196.5L601 199.9L603 203.4L605 207.3L607 211.3L609 215.6L611 220.0L613 224.6L615 229.4L617 234.3L619 239.4L621 244.5L623 249.7L625 255.0L627 260.3L629 265.7L631 271.0L633 276.3L635 281.6L637 286.7L639 291.8L641 296.8L643 301.7L645 306.4L647 311.0L649 315.4L651 319.5L653 323.5L655 327.2L657 330.7L659 333.9L661 336.8L663 339.5L665 341.9L667 343.9L669 345.7L671 347.1L673 348.2L675 349.0L677 349.4L679 349.5L681 349.3L683 348.7L685 347.8L687 346.6L689 345.0L691 343.1L693 341.0L695 338.5L697 335.7L699 332.7L701 329.3L703 325.8L705 321.9L707 317.9L709 313.6L711 309.2L713 304.6L715 299.8L717 294.9L719 289.8L721 284.7L723 279.5L725 274.2L727 268.9L729 263.5L731 258.2L733 252.9L735 247.6L737 242.5L739 237.4L741 232.4L743 227.5L745 222.8L747 218.2L749 213.8L751 209.7L753 205.7L755 202.0L757 198.5L759 195.3L761 192.4L763 189.7L765 187.3L767 185.3L769 183.5L771 182.1L773 181.0L775 180.2L777 179.8L779 179.7L781 179.9L783 180.5L785 181.4L787 182.6L789 184.2L791 186.1L793 188.2L795 190.7L797 193.5L799 196.5L801 199.9L803 203.4L805 207.3L807 211.3L809 215.6L811 220.0L813 224.6L815 229.4L817 234.3L819 239.4L821 244.5L823 249.7L825 255.0L827 260.3L829 265.7L831 271.0L833 276.3L835 281.6L837 286.7L839 291.8L841 296.8L843 301.7L845 306.4L847 311.0L849 315.4L851 319.5L853 323.5L855 327.2L857 330.7L859 333.9L861 336.8L863 339.5L865 341.9L867 343.9L869 345.7L871 347.1L873 348.2L875 349.0L877 349.4L879 349.5L881 349.3L883 348.7L885 347.8L887 346.6L889 345.0L891 343.1L893 341.0L895 338.5L897 335.7L899 332.7L901 329.3L903 325.8L905 321.9L907 317.9L909 313.6L911 309.2L913 304.6L915 299.8L917 294.9L919 289.8L921 284.7L923 279.5L925 274.2L927 268.9L929 263.5L931 258.2L933 252.9L935 247.6L937 242.5L939 237.4L941 232.4L943 227.5L945 222.8L947 218.2L949 213.8L951 209.7L953 205.7L955 202.0L957 198.5L959 195.3L961 192.4L963 189.7L965 187.3L967 185.3L969 183.5L971 182.1L973 181.0L975 180.2L977 179.8L979 179.7L981 179.9L983 180.5L985 181.4L987 182.6L989 184.2L991 186.1L993 188.2L995 190.7L997 193.5L999 196.5L1001 199.9L1003 203.4L1005 207.3L1007 211.3L1009 215.6L1011 220.0L1013 224.6L1015 229.4L1017 234.3L1019 239.4L1021 244.5L1023 249.7L1025 255.0L1027 260.3" stroke="#ffff00" stroke-width="2.400" stroke-linejoin="round"/>
<path d="M166.6 184.3L168.6 182.4L170.6 180.7L172.6 179.2L174.6 178.1L176.6 177.3L178.6 177.1L180.6 177.3L182.6 178.1L184.6 179.2L186.6 180.7L188.6 182.4L190.6 184.3L190.6 187.1L188.6 185.4L186.6 184.2L184.6 183.5L182.6 183.0L180.6 182.9L178.6 182.8L176.6 182.9L174.6 183.0L172.6 183.5L170.6 184.2L168.6 185.4L166.6 187.1ZM366.6 184.3L368.6 182.4L370.6 180.7L372.6 179.2L374.6 178.1L376.6 177.3L378.6 177.1L380.6 177.3L382.6 178.1L384.6 179.2L386.6 180.7L388.6 182.4L390.6 184.3L390.6 187.1L388.6 185.4L386.6 184.2L384.6 183.5L382.6 183.0L380.6 182.9L378.6 182.8L376.6 182.9L374.6 183.0L372.6 183.5L370.6 184.2L368.6 185.4L366.6 187.1ZM566.6 184.3L568.6 182.4L570.6 180.7L572.6 179.2L574.6 178.1L576.6 177.3L578.6 177.1L580.6 177.3L582.6 178.1L584.6 179.2L586.6 180.7L588.6 182.4L590.6 184.3L590.6 187.1L588.6 185.4L586.6 184.2L584.6 183.5L582.6 183.0L580.6 182.9L578.6 182.8L576.6 182.9L574.6 183.0L572.6 183.5L570.6 184.2L568.6 185.4L566.6 187.1ZM766.6 184.3L768.6 182.4L770.6 180.7L772.6 179.2L774.6 178.1L776.6 177.3L778.6 177.1L780.6 177.3L782.6 178.1L784.6 179.2L786.6 180.7L788.6 182.4L790.6 184.3L790.6 187.1L788.6 185.4L786.6 184.2L784.6 183.5L782.6 183.0L780.6 182.9L778.6 182.8L776.6 182.9L774.6 183.0L772.6 183.5L770.6 184.2L768.6 185.4L766.6 187.1ZM966.6 184.3L968.6 182.4L970.6 180.7L972.6 179.2L974.6 178.1L976.6 177.3L978.6 177.1L980.6 177.3L982.6 178.1L984.6 179.2L986.6 180.7L988.6 182.4L990.6 184.3L990.6 187.1L988.6 185.4L986.6 184.2L984.6 183.5L982.6 183.0L980.6 182.9L978.6 182.8L976.6 182.9L974.6 183.0L972.6 183.5L970.6 184.2L968.6 185.4L966.6 187.1Z" fill="#ffff00" stroke="none"/>
<path d="M27.5 431V434M28.5 434V438M29.5 438V442M30.5 439V443M31.5 442V446M32.5 444V449M33.5 449V451M34.5 451V455M35.5 453V456M36.5 456V458M37.5 457V462M38.5 461V465M39.5 463V466M40.5 466V469M41.5 467V472M42.5 471V475M43.5 473V476M44.5 476V479M45.5 478V482M46.5 480V483M47.5 483V486M48.5 484V488M49.5 487V491M50.5 489V493M51.5 490V494M52.5 490V495M53.5 494V499M54.5 498V499M55.5 498V502M56.5 501V503M57.5 503V505M58.5 503V507M59.5 507V508M60.5 506V510M61.5 509V511M62.5 511V513M63.5 512V514M64.5 512V514M65.5 513V516M66.5 513V517M67.5 516V517M68.5 516V518M69.5 518V519M70.5 518V520M71.5 518V521M72.5 519V523M73.5 519V523M74.5 521V524M75.5 520V525M76.5 521V525M77.5 522V524M78.5 521V523M79.5 522V524M80.5 521V523M81.5 521V524M82.5 520V524M83.5 520V523M84.5 518V521M85.5 518V521M86.5 519V522M87.5 517V521M88.5 517V520M89.5 517V519M90.5 517V518M91.5 514V517M92.5 513V515M93.5 512V516M94.5 512V514M95.5 511V514M96.5 508V514M97.5 507V509M98.5 506V509M99.5 505V509M100.5 502V505M101.5 500V505M102.5 498V502M103.5 496V500M104.5 496V498M105.5 493V496M106.5 491V493M107.5 489V493M108.5 486V492M109.5 485V489M110.5 483V486M111.5 479V483M112.5 478V481M113.5 476V481M114.5 474V476M115.5 472V474M116.5 468V474M117.5 466V470M118.5 460V466M119.5 461V465M120.5 458V461M121.5 455V460M122.5 452V457M123.5 450V454M124.5 447V451M125.5 445V449M126.5 443V446M127.5 439V444M128.5 438V440M129.5 434V439M130.5 432V436M131.5 429V432M132.5 427V430M133.5 424V427M134.5 421V424M135.5 417V422M136.5 416V419M137.5 413V416M138.5 411V415M139.5 407V411M140.5 404V407M141.5 403V407M142.5 401V404M143.5 397V402M144.5 396V399M145.5 394V397M146.5 390V394M147.5 389V391M148.5 387V390M149.5 386V389M150.5 383V387M151.5 381V384M152.5 379V383M153.5 377V380M154.5 374V379M155.5 372V378M156.5 371V375M157.5 369V372M158.5 368V372M159.5 367V369M160.5 365V369M161.5 364V366M162.5 363V365M163.5 361V363M164.5 359V363M165.5 359V361M166.5 359V363M167.5 357V359M168.5 355V358M169.5 355V357M170.5 356V357M171.5 355V358M172.5 353V356M173.5 354V355M174.5 352V355M175.5 351V353M176.5 352V354M177.5 351V353M178.5 352V355M179.5 351V354M180.5 352V354M181.5 352V355M182.5 352V354M183.5 353V355M184.5 352V355M185.5 354V356M186.5 353V357M187.5 354V357M188.5 355V357M189.5 355V359M190.5 357V360M191.5 359V361M192.5 359V360M193.5 359V363M194.5 361V364M195.5 361V365M196.5 362V366M197.5 365V368M198.5 366V369M199.5 367V371M200.5 370V373M201.5 372V375M202.5 373V376M203.5 375V378M204.5 376V381M205.5 379V382M206.5 381V383M207.5 383V387M208.5 385V389M209.5 386V390M210.5 389V393M211.5 393V394M212.5 394V397M213.5 394V400M214.5 398V403M215.5 401V404M216.5 401V406M217.5 406V409M218.5 407V412M219.5 410V414M220.5 414V416M221.5 415V419M222.5 418V422M223.5 422V425M224.5 424V428M225.5 428V431M226.5 430V433M227.5 432V435M228.5 434V439M229.5 439V441M230.5 440V444M231.5 443V446M232.5 445V449M233.5 447V451M234.5 450V453M235.5 453V456M236.5 456V459M237.5 458V461M238.5 460V464M239.5 463V467M240.5 466V470M241.5 469V473M242.5 471V475M243.5 473V477M244.5 476V480M245.5 477V482M246.5 480V484M247.5 484V486M248.5 485V488M249.5 486V489M250.5 489V491M251.5 491V495M252.5 492V496M253.5 494V499M254.5 499V501M255.5 500V502M256.5 501V504M257.5 503V505M258.5 505V507M259.5 505V509M260.5 508V509M261.5 509V511M262.5 509V512M263.5 511V513M264.5 512V515M265.5 514V516M266.5 515V516M267.5 515V518M268.5 517V520M269.5 519V520M270.5 518V521M271.5 519V522M272.5 519V522M273.5 520V522M274.5 519V522M275.5 517V523M276.5 521V522M277.5 520V525M278.5 520V522M279.5 520V523M280.5 521V523M281.5 520V523M282.5 521V523M283.5 520V522M284.5 520V522M285.5 520V522M286.5 519V522M287.5 518V522M288.5 516V521M289.5 517V519M290.5 516V518M291.5 515V517M292.5 514V517M293.5 512V514M294.5 511V515M295.5 510V513M296.5 508V512M297.5 508V511M298.5 506V509M299.5 504V507M300.5 502V506M301.5 500V504M302.5 499V501M303.5 498V500M304.5 495V498M305.5 494V496M306.5 492V494M307.5 490V493M308.5 488V491M309.5 484V488M310.5 483V485M311.5 481V483M312.5 478V481M313.5 475V478M314.5 472V477M315.5 470V475M316.5 468V473M317.5 465V469M318.5 463V470M319.5 461V464M320.5 456V462M321.5 456V458M322.5 453V457M323.5 450V453M324.5 448V451M325.5 446V449M326.5 443V447M327.5 439V443M328.5 437V441M329.5 434V438M330.5 432V436M331.5 429V433M332.5 425V430M333.5 424V428M334.5 422V425M335.5 419V422M336.5 416V420M337.5 411V417M338.5 411V414M339.5 408V411M340.5 407V411M341.5 403V408M342.5 400V405M343.5 399V402M344.5 397V400M345.5 393V397M346.5 391V394M347.5 389V394M348.5 386V390M349.5 384V389M350.5 383V385M351.5 381V384M352.5 380V383M353.5 377V380M354.5 374V379M355.5 374V375M356.5 371V375M357.5 370V374M358.5 369V371M359.5 366V370M360.5 366V368M361.5 364V367M362.5 363V367M363.5 362V364M364.5 360V362M365.5 357V362M366.5 359V360M367.5 357V359M368.5 356V358M369.5 355V357M370.5 354V358M371.5 351V357M372.5 353V356M373.5 354V356M374.5 352V355M375.5 352V354M376.5 352V355M377.5 352V354M378.5 349V354M379.5 352V354M380.5 352V354M381.5 351V354M382.5 352V354M383.5 351V354M384.5 353V356M385.5 353V356M386.5 354V357M387.5 354V357M388.5 354V358M389.5 356V358M390.5 357V360M391.5 357V361M392.5 359V361M393.5 360V363M394.5 362V364M395.5 363V365M396.5 364V367M397.5 366V368M398.5 366V370M399.5 369V370M400.5 370V373M401.5 372V377M402.5 373V376M403.5 374V377M404.5 377V379M405.5 379V381M406.5 381V384M407.5 382V386M408.5 383V389M409.5 387V390M410.5 388V392M411.5 391V397M412.5 394V397M413.5 396V399M414.5 399V402M415.5 402V404M416.5 404V406M417.5 405V410M418.5 408V411M419.5 411V414M420.5 414V418M421.5 416V419M422.5 418V424M423.5 419V425M424.5 424V427M425.5 427V431M426.5 427V433M427.5 432V435M428.5 435V439M429.5 436V441M430.5 440V443M431.5 443V446M432.5 445V449M433.5 448V451M434.5 450V454M435.5 453V457M436.5 456V460M437.5 459V462M438.5 461V464M439.5 462V467M440.5 466V469M441.5 468V472M442.5 471V474M443.5 472V476M444.5 476V480M445.5 477V480M446.5 480V483M447.5 483V485M448.5 484V489M449.5 487V490M450.5 488V493M451.5 492V494M452.5 491V496M453.5 495V498M454.5 496V500M455.5 498V502M456.5 500V503M457.5 502V506M458.5 501V506M459.5 506V509M460.5 508V509M461.5 507V512M462.5 510V514M463.5 510V514M464.5 513V516M465.5 512V517M466.5 512V517M467.5 516V518M468.5 517V522M469.5 517V520M470.5 519V521M471.5 519V522M472.5 519V522M473.5 519V521M474.5 521V523M475.5 520V522M476.5 521V524M477.5 522V524M478.5 521V523M479.5 520V523M480.5 522V524M481.5 522V524M482.5 521V524M483.5 521V524M484.5 521V522M485.5 518V522M486.5 516V521M487.5 518V521M488.5 518V520M489.5 517V519M490.5 515V517M491.5 515V518M492.5 514V516M493.5 512V517M494.5 512V514M495.5 510V512M496.5 508V511M497.5 507V510M498.5 506V507M499.5 503V508M500.5 503V505M501.5 499V505M502.5 498V501M503.5 497V501M504.5 495V497M505.5 492V497M506.5 489V495M507.5 490V493M508.5 487V491M509.5 484V487M510.5 481V487M511.5 480V483M512.5 478V481M513.5 475V479M514.5 473V476M515.5 470V473M516.5 468V472M517.5 465V469M518.5 463V465M519.5 461V465M520.5 459V461M521.5 455V460M522.5 452V457M523.5 452V454M524.5 447V452M525.5 445V448M526.5 442V446M527.5 439V444M528.5 437V441M529.5 435V439M530.5 432V436M531.5 428V433M532.5 426V431M533.5 424V427M534.5 421V425M535.5 418V422M536.5 416V420M537.5 413V418M538.5 410V414M539.5 407V412M540.5 405V409M541.5 403V408M542.5 400V405M543.5 399V402M544.5 394V401M545.5 395V396M546.5 391V395M547.5 390V393M548.5 387V390M549.5 386V388M550.5 383V387M551.5 381V383M552.5 379V384M553.5 376V380M554.5 374V378M555.5 372V376M556.5 371V375M557.5 370V373M558.5 368V371M559.5 367V369M560.5 365V369M561.5 364V367M562.5 362V365M563.5 361V364M564.5 360V363M565.5 359V361M566.5 358V360M567.5 358V359M568.5 356V359M569.5 355V357M570.5 355V359M571.5 353V356M572.5 353V357M573.5 353V355M574.5 352V354M575.5 351V355M576.5 352V354M577.5 351V354M578.5 351V354M579.5 352V356M580.5 349V354M581.5 352V354M582.5 351V355M583.5 352V356M584.5 353V355M585.5 353V357M586.5 353V356M587.5 354V357M588.5 355V358M589.5 355V358M590.5 357V361M591.5 358V360M592.5 358V362M593.5 360V364M594.5 362V365M595.5 361V366M596.5 363V368M597.5 365V367M598.5 366V370M599.5 368V371M600.5 370V373M601.5 370V375M602.5 372V376M603.5 375V377M604.5 376V380M605.5 380V381M606.5 381V383M607.5 382V387M608.5 385V389M609.5 386V391M610.5 390V392M611.5 392V397M612.5 393V398M613.5 395V401M614.5 397V402M615.5 401V403M616.5 403V407M617.5 406V409M618.5 408V412M619.5 410V415M620.5 413V417M621.5 416V420M622.5 418V422M623.5 422V425M624.5 424V428M625.5 426V430M626.5 430V433M627.5 432V436M628.5 432V439M629.5 437V440M630.5 440V444M631.5 442V446M632.5 445V448M633.5 448V451M634.5 450V454M635.5 453V457M636.5 456V459M637.5 459V462M638.5 460V465M639.5 463V467M640.5 466V469M641.5 469V471M642.5 471V475M643.5 475V477M644.5 475V479M645.5 479V481M646.5 481V482M647.5 482V485M648.5 485V488M649.5 487V491M650.5 490V493M651.5 492V494M652.5 492V498M653.5 495V499M654.5 496V500M655.5 497V502M656.5 500V504M657.5 501V506M658.5 503V507M659.5 507V509M660.5 508V511M661.5 508V511M662.5 509V512M663.5 510V515M664.5 513V515M665.5 513V519M666.5 515V517M667.5 516V519M668.5 516V518M669.5 518V520M670.5 517V520M671.5 518V523M672.5 519V523M673.5 520V522M674.5 520V523M675.5 521V523M676.5 521V523M677.5 521V527M678.5 521V524M679.5 521V523M680.5 521V527M681.5 521V523M682.5 521V523M683.5 521V525M684.5 521V523M685.5 519V522M686.5 519V522M687.5 518V522M688.5 517V520M689.5 516V519M690.5 515V518M691.5 516V518M692.5 513V516M693.5 512V516M694.5 512V514M695.5 511V513M696.5 509V512M697.5 507V510M698.5 506V509M699.5 504V508M700.5 502V505M701.5 501V504M702.5 499V502M703.5 496V499M704.5 495V498M705.5 494V497M706.5 490V495M707.5 490V494M708.5 487V490M709.5 484V487M710.5 483V486M711.5 480V484M712.5 478V482M713.5 476V479M714.5 473V478M715.5 471V475M716.5 468V472M717.5 465V472M718.5 463V468M719.5 461V464M720.5 458V461M721.5 456V460M722.5 453V457M723.5 450V454M724.5 448V451M725.5 444V449M726.5 443V447M727.5 440V444M728.5 438V440M729.5 433V439M730.5 430V436M731.5 429V432M732.5 427V430M733.5 422V428M734.5 421V426M735.5 418V421M736.5 416V420M737.5 414V417M738.5 411V414M739.5 405V411M740.5 405V409M741.5 404V407M742.5 401V404M743.5 398V402M744.5 393V399M745.5 394V397M746.5 391V395M747.5 389V393M748.5 386V390M749.5 385V388M750.5 382V385M751.5 381V384M752.5 379V382M753.5 377V381M754.5 375V378M755.5 373V375M756.5 370V374M757.5 370V371M758.5 369V372M759.5 367V369M760.5 365V368M761.5 363V367M762.5 363V365M763.5 362V363M764.5 359V362M765.5 359V362M766.5 358V361M767.5 356V358M768.5 357V358M769.5 355V357M770.5 354V357M771.5 354V356M772.5 354V356M773.5 352V355M774.5 352V355M775.5 351V355M776.5 352V353M777.5 351V353M778.5 352V355M779.5 351V354M780.5 351V354M781.5 352V353M782.5 353V355M783.5 352V353M784.5 352V355M785.5 354V355M786.5 354V356M787.5 354V356M788.5 355V357M789.5 356V358M790.5 357V359M791.5 358V360M792.5 359V362M793.5 360V361M794.5 360V364M795.5 364V367M796.5 364V367M797.5 366V367M798.5 367V369M799.5 369V371M800.5 370V373M801.5 371V375M802.5 372V376M803.5 375V378M804.5 377V381M805.5 378V381M806.5 380V385M807.5 383V387M808.5 385V389M809.5 389V390M810.5 389V392M811.5 391V395M812.5 394V397M813.5 396V399M814.5 398V403M815.5 401V404M816.5 403V407M817.5 405V410M818.5 405V411M819.5 410V413M820.5 412V417M821.5 417V420M822.5 419V423M823.5 421V424M824.5 424V427M825.5 427V430M826.5 428V433M827.5 432V435M828.5 434V439M829.5 437V441M830.5 436V443M831.5 442V447M832.5 445V450M833.5 447V451M834.5 450V454M835.5 450V458M836.5 454V458M837.5 458V462M838.5 461V464M839.5 463V468M840.5 467V469M841.5 467V471M842.5 471V474M843.5 473V477M844.5 475V478M845.5 478V481M846.5 481V485M847.5 483V486M848.5 484V488M849.5 486V490M850.5 490V493M851.5 493V496M852.5 493V497M853.5 494V498M854.5 497V500M855.5 498V501M856.5 501V503M857.5 502V507M858.5 505V508M859.5 506V509M860.5 509V510M861.5 509V512M862.5 510V512M863.5 511V515M864.5 512V514M865.5 513V516M866.5 513V517M867.5 512V518M868.5 517V521M869.5 518V520M870.5 519V522M871.5 519V522M872.5 519V524M873.5 520V523M874.5 520V522M875.5 520V523M876.5 521V524M877.5 522V524M878.5 521V525M879.5 521V524M880.5 519V523M881.5 522V524M882.5 522V524M883.5 520V523M884.5 519V523M885.5 520V522M886.5 520V522M887.5 518V521M888.5 518V520M889.5 516V519M890.5 516V518M891.5 515V518M892.5 513V518M893.5 513V516M894.5 512V515M895.5 510V513M896.5 509V510M897.5 507V510M898.5 505V507M899.5 504V507M900.5 504V506M901.5 500V504M902.5 499V501M903.5 497V501M904.5 495V499M905.5 492V496M906.5 491V494M907.5 490V492M908.5 487V491M909.5 484V490M910.5 481V486M911.5 480V484M912.5 478V482M913.5 475V479M914.5 473V476M915.5 471V473M916.5 469V473M917.5 467V470M918.5 464V467M919.5 461V464M920.5 458V462M921.5 456V459M922.5 454V456M923.5 451V456M924.5 446V451M925.5 444V449M926.5 442V447M927.5 440V443M928.5 436V442M929.5 434V439M930.5 432V436M931.5 428V432M932.5 426V430M933.5 423V428M934.5 421V424M935.5 418V422M936.5 416V420M937.5 413V416M938.5 410V413M939.5 408V412M940.5 405V409M941.5 404V407M942.5 400V404M943.5 399V401M944.5 395V399M945.5 394V398M946.5 391V395M947.5 389V393M948.5 387V391M949.5 384V389M950.5 381V386M951.5 381V384M952.5 378V381M953.5 377V379M954.5 374V378M955.5 373V376M956.5 371V375M957.5 369V373M958.5 368V371M959.5 366V370M960.5 364V367M961.5 364V365M962.5 362V364M963.5 361V365M964.5 360V362M965.5 359V361M966.5 357V361M967.5 357V359M968.5 356V359M969.5 355V357M970.5 355V357M971.5 352V356M972.5 354V356M973.5 350V355M974.5 349V355M975.5 351V353M976.5 352V354M977.5 351V354M978.5 352V354M979.5 351V355M980.5 351V355M981.5 352V354M982.5 352V354M983.5 351V354M984.5 354V355M985.5 352V356M986.5 353V356M987.5 354V357M988.5 354V358M989.5 355V358M990.5 357V359M991.5 357V360M992.5 359V361M993.5 360V362M994.5 360V362M995.5 361V364M996.5 362V367M997.5 366V368M998.5 368V370M999.5 368V370M1000.5 369V372M1001.5 371V374M1002.5 374V376M1003.5 376V378M1004.5 378V379M1005.5 378V382M1006.5 381V383M1007.5 383V385M1008.5 384V388M1009.5 387V389M1010.5 389V392M1011.5 392V395M1012.5 394V397M1013.5 397V400M1014.5 398V402M1015.5 401V404M1016.5 404V407M1017.5 406V409M1018.5 408V411M1019.5 411V416M1020.5 412V417M1021.5 417V419M1022.5 419V421M1023.5 421V425M1024.5 423V427M1025.5 427V429M1026.5 429V432M1027.5 432V436M1028.5 434V438" stroke="#fff" stroke-width="1" shape-rendering="crispEdges"/>
<path d="M53 715.5h5M58 715.5h2M123 547.5h7M160 715.5h5M207 715.5h7M270 547.5h4M278 547.5h5M325 547.5h4M401 715.5h4M456 715.5h5M641 715.5h2M747 547.5h5M789 715.5h2M859 715.5h2M873 547.5h2M919 547.5h3M931 547.5h2M940 547.5h7" stroke="#00ffff" stroke-width="3" shape-rendering="crispEdges"/>
<path d="M37 715.5h2M58 547.5h9M67 547.5h4M104 547.5h2M106 547.5h12M141 547.5h4M170 709.5h16M186 709.5h3M198 709.5h12M224 709.5h5M257 709.5h4M231 715.5h5M245 715.5h12M274 547.5h4M283 547.5h4M287 547.5h9M296 547.5h4M300 547.5h5M309 547.5h16M329 547.5h4M354 547.5h7M375 709.5h9M431 709.5h16M450 709.5h7M360 715.5h3M398 715.5h3M419 715.5h16M435 715.5h9M444 715.5h12M458 547.5h16M493 547.5h2M514 547.5h5M519 547.5h9M535 547.5h9M551 547.5h2M558 709.5h5M586 709.5h5M607 709.5h3M619 709.5h9M574 715.5h5M643 715.5h5M668 547.5h5M673 547.5h2M675 547.5h12M687 547.5h12M711 547.5h12M745 547.5h2M774 709.5h2M776 709.5h3M779 709.5h7M835 709.5h12M776 715.5h9M791 715.5h12M862 547.5h2M869 547.5h4M903 547.5h16M947 547.5h7M954 547.5h2M956 547.5h2M958 547.5h3M961 709.5h2M960 715.5h3M974 715.5h5M991 715.5h2M993 715.5h9M1023 715.5h3" stroke="#00b4b4" stroke-width="3" shape-rendering="crispEdges"/>
<path d="M28 709.5h2M30 709.5h3M33 709.5h5M38 709.5h3M41 709.5h7M48 709.5h4M52 709.5h4M28 715.5h9M39 715.5h7M60 715.5h1M71 547.5h5M76 547.5h12M88 547.5h16M120 547.5h3M130 547.5h9M145 547.5h16M106 541.5h16M127 541.5h9M141 541.5h4M145 541.5h10M158 709.5h3M161 709.5h9M189 709.5h5M210 709.5h5M215 709.5h9M229 709.5h12M158 715.5h2M181 715.5h5M214 715.5h5M257 715.5h4M258 547.5h12M305 547.5h2M307 547.5h2M349 547.5h5M274 541.5h3M280 541.5h16M310 541.5h7M343 541.5h4M347 541.5h8M358 709.5h3M361 709.5h2M384 709.5h16M400 709.5h7M407 709.5h12M419 709.5h7M447 709.5h3M457 709.5h2M459 709.5h2M363 715.5h16M382 715.5h16M408 715.5h4M412 715.5h4M416 715.5h3M474 547.5h3M477 547.5h16M495 547.5h12M507 547.5h5M512 547.5h2M528 547.5h7M544 547.5h7M560 547.5h1M481 541.5h12M493 541.5h3M499 541.5h9M529 541.5h9M545 541.5h10M570 709.5h5M575 709.5h5M582 709.5h4M591 709.5h5M612 709.5h7M628 709.5h5M642 709.5h4M646 709.5h3M652 709.5h9M558 715.5h16M579 715.5h16M629 715.5h12M648 715.5h9M658 547.5h3M702 547.5h7M709 547.5h2M723 547.5h16M739 547.5h2M741 547.5h4M752 547.5h9M684 541.5h4M688 541.5h7M719 541.5h16M786 709.5h16M802 709.5h5M807 709.5h12M819 709.5h16M850 709.5h7M860 709.5h1M803 715.5h16M819 715.5h12M843 715.5h9M852 715.5h3M855 715.5h4M858 547.5h4M864 547.5h5M875 547.5h12M887 547.5h16M922 547.5h9M938 547.5h2M867 541.5h5M872 541.5h7M879 541.5h7M886 541.5h16M902 541.5h7M916 541.5h3M958 709.5h3M963 709.5h2M965 709.5h16M981 709.5h16M1017 709.5h9M958 715.5h2M963 715.5h7M972 715.5h2M979 715.5h9" stroke="#008c8c" stroke-width="3" shape-rendering="crispEdges"/>
<path d="M56 709.5h5M124 541.5h3M194 709.5h4M241 709.5h16M219 715.5h12M308 541.5h2M317 541.5h7M426 709.5h5M358 715.5h2M596 709.5h4M610 709.5h2M633 709.5h9M595 715.5h12M735 541.5h2M753 541.5h2M758 709.5h9M769 709.5h5M1013 709.5h4" stroke="#006a6a" stroke-width="3" shape-rendering="crispEdges"/>
<path d="M27 712.5H59.5V544.5H158.5V712.5H259.5V544.5H358.5V712.5H459.5V544.5H558.5V712.5H659.5V544.5H758.5V712.5H859.5V544.5H958.5V712.5H1028" stroke="#00ffff" stroke-width="3" stroke-linejoin="miter" shape-rendering="crispEdges"/>
<path d="M57.5 549V709M160.5 549V709M257.5 549V709M360.5 549V709M457.5 549V709M560.5 549V709M657.5 549V709M760.5 549V709M857.5 549V709M960.5 549V709" stroke="#007878" stroke-width="1" shape-rendering="crispEdges"/>
</g>
<path d="M8 262.0H20L25.500 267.5L20 273.0H8Z" fill="#ffff00"/><text x="14.500" y="271.0" font-size="10" text-anchor="middle" fill="#111" font-family="Liberation Sans, sans-serif">1</text>
<path d="M8 434.0H20L25.500 439.5L20 445.0H8Z" fill="#ffffff"/><text x="14.500" y="443.0" font-size="10" text-anchor="middle" fill="#111" font-family="Liberation Sans, sans-serif">R</text>
<path d="M8 617.0H20L25.500 622.5L20 628.0H8Z" fill="#00ffff"/><text x="14.500" y="626.0" font-size="10" text-anchor="middle" fill="#111" font-family="Liberation Sans, sans-serif">2</text>
<path d="M1046 262H1035L1029 267.500L1035 273H1046Z" fill="#ffff00"/><text x="1040" y="271.500" font-size="10" text-anchor="middle" fill="#111" font-family="Liberation Sans, sans-serif">T</text>
</svg>
<i class="bk" style="left:21px;top:649px;width:92px;height:19px;background:#000"></i><span class="t" style="left:22.5px;top:653.1px;font-size:12.5px;line-height:12.5px;letter-spacing:-0.158px;color:#ffff00;">CH1</span><span class="t tl" style="left:49.0px;top:651.3px;color:#ffff00">∿</span><span class="t" style="left:66.1px;top:653.1px;font-size:12.5px;line-height:12.5px;letter-spacing:0.123px;color:#ffff00;">500mV</span><i class="bk" style="left:131px;top:649px;width:92px;height:19px;background:#000"></i><i class="bk" style="left:132px;top:651px;width:27px;height:15px;background:#00ffff"></i><span class="t" style="left:132.7px;top:653.1px;font-size:12.5px;line-height:12.5px;letter-spacing:0.242px;color:#000;">CH2</span><span class="t tl" style="left:159.0px;top:651.3px;color:#00ffff">∿</span><span class="t" style="left:175.5px;top:653.1px;font-size:12.5px;line-height:12.5px;letter-spacing:0.023px;color:#00ffff;">500mV</span><i class="bk" style="left:930px;top:649px;width:90px;height:19px;background:#000"></i><span class="t" style="left:931.5px;top:653.1px;font-size:12.5px;line-height:12.5px;letter-spacing:0.062px;color:#ff8000;">Time: 500.0us</span>
</div>
<div id="panel"><div class="pl"></div>
<span class="lb" style="left:13px;top:7px;letter-spacing:-0.047px">Connect:</span>
<i class="led" style="left:60px;top:4px"></i>
<div class="hl" style="left:3px;top:28px;width:191px"></div>
<div class="hl" style="left:3px;top:29px;width:177px;background:#fbfbfb"></div>
<div class="sb" style="left:180px;top:29px;width:14px;height:642px"><svg width="14" height="17" viewBox="0 0 14 17" style="position:absolute;left:0;top:0"><path d="M4 11.500L7.500 7.800L11 11.500" fill="none" stroke="#505050" stroke-width="2"/></svg><div class="th" style="top:17px;height:459px"></div></div>
<div class="gb" style="left:8px;top:40px;width:168px;height:111px"></div><span class="gl" style="left:17px;top:33px;letter-spacing:-0.015px">Horizontal</span>
<span class="lb" style="left:11px;top:54px;letter-spacing:-0.305px">Time / DIV</span>
<div class="cb" style="left:11px;top:73px;width:68px;height:22px"><span style="letter-spacing:0.024px">500.0us</span><svg width="9" height="6" viewBox="0 0 9 6"><path d="M0.500 0.800L4.500 4.800L8.500 0.800" fill="none" stroke="#444" stroke-width="1.100"/></svg></div>
<span class="lb" style="left:11px;top:101px;letter-spacing:-0.169px">Format</span>
<div class="cb" style="left:11px;top:122px;width:68px;height:22px"><span style="letter-spacing:0.416px">Y - T</span><svg width="9" height="6" viewBox="0 0 9 6"><path d="M0.500 0.800L4.500 4.800L8.500 0.800" fill="none" stroke="#444" stroke-width="1.100"/></svg></div>
<svg class="kn" style="left:83px;top:51px" width="90" height="90" viewBox="1130 147 90 90"><defs><linearGradient id="kg1" x1="0.150" y1="0" x2="0.850" y2="1"><stop offset="0" stop-color="#cecece"/><stop offset=".35" stop-color="#b6b6b6"/><stop offset=".7" stop-color="#868686"/><stop offset="1" stop-color="#a0a0a0"/></linearGradient></defs><path d="M1148.8 219.5A37.9 37.9 0 1 1 1201.2 219.5" fill="#fff" stroke="#111" stroke-width="1"/><path d="M1143.2 222.79999999999998L1150.5 216.1M1206.2 222.79999999999998L1199.2 216.1" stroke="#111" stroke-width="1.200"/><circle cx="1175" cy="192.1" r="35.100" fill="url(#kg1)" stroke="#5c5c5c" stroke-width="1"/><circle cx="1175" cy="192.1" r="27.300" fill="#0000d4" stroke="#00008c" stroke-width="2.600"/><path d="M1181.4 169.3L1177 185" stroke="#e8e040" stroke-width="1.600"/></svg>
<div class="gb" style="left:8px;top:164px;width:168px;height:151px"></div><span class="gl" style="left:17px;top:157px;letter-spacing:0.175px">Vertical</span>
<div class="cb" style="left:11px;top:181px;width:68px;height:22px"><span style="letter-spacing:-0.558px">CH2</span><svg width="9" height="6" viewBox="0 0 9 6"><path d="M0.500 0.800L4.500 4.800L8.500 0.800" fill="none" stroke="#444" stroke-width="1.100"/></svg></div>
<div class="ck" style="left:84px;top:183px"><svg width="13" height="13" viewBox="0 0 13 13"><path d="M2.500 6.500L5 9.500L10.500 2.800" fill="none" stroke="#333" stroke-width="1.100"/></svg></div>
<span class="lb" style="left:100px;top:183px;letter-spacing:-0.573px">ON/OFF</span>
<div class="sp" style="left:11px;top:209px;width:68px;height:21px"><span class="sel" style="letter-spacing:0.423px">500mV</span><div class="ud"><b><svg width="7" height="4" viewBox="0 0 7 4"><path d="M1 3.500L3.500 0.500L6 3.500Z" fill="#000"/></svg></b><b><svg width="7" height="4" viewBox="0 0 7 4"><path d="M1 0.500L3.500 3.500L6 0.500Z" fill="#000"/></svg></b></div></div>
<div class="cb" style="left:11px;top:236px;width:68px;height:22px"><span style="letter-spacing:0.819px">AC</span><svg width="9" height="6" viewBox="0 0 9 6"><path d="M0.500 0.800L4.500 4.800L8.500 0.800" fill="none" stroke="#444" stroke-width="1.100"/></svg></div>
<div class="cb" style="left:11px;top:264px;width:68px;height:22px"><span style="letter-spacing:-0.225px">x1</span><svg width="9" height="6" viewBox="0 0 9 6"><path d="M0.500 0.800L4.500 4.800L8.500 0.800" fill="none" stroke="#444" stroke-width="1.100"/></svg></div>
<svg class="kn" style="left:91px;top:228px" width="90" height="90" viewBox="1138 324 90 90"><defs><linearGradient id="kg2" x1="0.150" y1="0" x2="0.850" y2="1"><stop offset="0" stop-color="#cecece"/><stop offset=".35" stop-color="#b6b6b6"/><stop offset=".7" stop-color="#868686"/><stop offset="1" stop-color="#a0a0a0"/></linearGradient></defs><path d="M1156.8 396.5A37.9 37.9 0 1 1 1209.2 396.5" fill="#fff" stroke="#111" stroke-width="1"/><path d="M1151.2 399.8L1158.5 393.1M1214.2 399.8L1207.2 393.1" stroke="#111" stroke-width="1.200"/><circle cx="1183" cy="369.1" r="35.100" fill="url(#kg2)" stroke="#5c5c5c" stroke-width="1"/><circle cx="1183" cy="369.1" r="27.300" fill="#00ffff" stroke="#008c8c" stroke-width="2.600"/><path d="M1164.4 354.6L1177 364.5" stroke="#d03030" stroke-width="1.600"/></svg>
<div class="gb" style="left:8px;top:327px;width:168px;height:241px"></div><span class="gl" style="left:17px;top:320px;letter-spacing:0.11px">Trigger</span>
<span class="lb" style="left:11px;top:346px;letter-spacing:-0.101px">Trigger Mode</span>
<div class="cb" style="left:98px;top:342px;width:68px;height:22px"><span style="letter-spacing:-0.234px">Edge</span><svg width="9" height="6" viewBox="0 0 9 6"><path d="M0.500 0.800L4.500 4.800L8.500 0.800" fill="none" stroke="#444" stroke-width="1.100"/></svg></div>
<span class="lb" style="left:11px;top:376px;letter-spacing:0.123px">Trigger Sweep</span>
<div class="cb" style="left:98px;top:372px;width:68px;height:22px"><span style="letter-spacing:-0.286px">AUTO</span><svg width="9" height="6" viewBox="0 0 9 6"><path d="M0.500 0.800L4.500 4.800L8.500 0.800" fill="none" stroke="#444" stroke-width="1.100"/></svg></div>
<span class="lb" style="left:11px;top:406px;letter-spacing:0.02px">Trigger Source</span>
<div class="cb" style="left:98px;top:402px;width:68px;height:22px"><span style="letter-spacing:-1.008px">CH1</span><svg width="9" height="6" viewBox="0 0 9 6"><path d="M0.500 0.800L4.500 4.800L8.500 0.800" fill="none" stroke="#444" stroke-width="1.100"/></svg></div>
<span class="lb" style="left:11px;top:435px;letter-spacing:-0.06px">Trigger Slope</span>
<div class="cb" style="left:98px;top:433px;width:68px;height:22px"><span>+</span><svg width="9" height="6" viewBox="0 0 9 6"><path d="M0.500 0.800L4.500 4.800L8.500 0.800" fill="none" stroke="#444" stroke-width="1.100"/></svg></div>
<div class="gb" style="left:3px;top:607px;width:168px;height:70px"></div><span class="gl" style="left:12px;top:600px;-webkit-text-stroke:0.220px #000;letter-spacing:0.069px">Move Waveform</span>
<span class="lb dis" style="left:4.5px;top:619px;letter-spacing:-0.095px">Length :</span>
<div class="ed" style="left:92px;top:614px;width:68px;height:19px"><span>2560</span></div>
<span class="lb dis" style="left:4.5px;top:652px;letter-spacing:-0.047px">Step</span>
<div class="sp2" style="left:90px;top:650px;width:69px;height:21px"><span>1000</span><div class="ud2"><b><svg width="7" height="4" viewBox="0 0 7 4"><path d="M1 3.500L3.500 0.500L6 3.500Z" fill="#444"/></svg></b><b><svg width="7" height="4" viewBox="0 0 7 4"><path d="M1 0.500L3.500 3.500L6 0.500Z" fill="#444"/></svg></b></div></div></div>
<div id="status"><span style="left:1.5px;top:5.0px;line-height:12.4px;letter-spacing:0.308px">Connected</span><span style="left:1000.7px;top:5.0px;line-height:12.4px;letter-spacing:-0.104px">500.00KSa</span><span style="left:1108.9px;top:5.0px;line-height:12.4px;letter-spacing:0.245px">18-09-2017</span><span style="left:1183.2px;top:5.0px;line-height:12.4px;letter-spacing:-0.054px">15:00</span><i class="sd" style="left:996px"></i>
<svg style="position:absolute;left:1226px;top:7px" width="10" height="10" viewBox="0 0 10 10"><g fill="#b8b8b8"><rect x="7" y="1" width="2" height="2"/><rect x="4" y="4" width="2" height="2"/><rect x="7" y="4" width="2" height="2"/><rect x="1" y="7" width="2" height="2"/><rect x="4" y="7" width="2" height="2"/><rect x="7" y="7" width="2" height="2"/></g></svg>
</div>
</div>
</body></html>
